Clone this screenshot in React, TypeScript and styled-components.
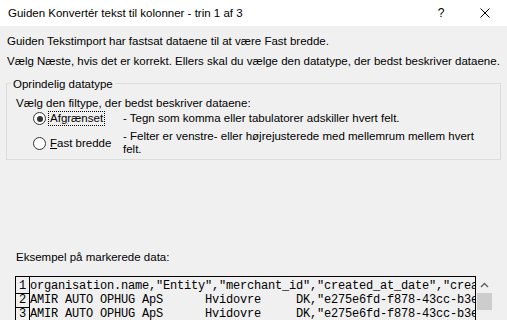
import React from "react";
import styled, { createGlobalStyle } from "styled-components";

const GlobalStyle = createGlobalStyle`
  html, body { margin: 0; padding: 0; background: #f0f0f0; }
  body {
    font-family: "Liberation Sans", Arial, sans-serif;
    font-size: 11.5px;
    color: #000;
  }
`;

const Window = styled.div`
  width: 507px;
  height: 320px;
  overflow: hidden;
  background: #f0f0f0;
`;

const TitleBar = styled.div`
  display: flex;
  align-items: center;
  height: 26px;
  background: #fff;
`;

const Title = styled.div`
  flex: 1;
  padding-left: 8px;
  white-space: nowrap;
`;

const TitleButton = styled.div`
  width: 44px;
  height: 26px;
  display: flex;
  align-items: center;
  justify-content: center;
  font-size: 12px;
  color: #000;
`;

const Intro = styled.div`
  padding: 5px 7px 0;
  line-height: 20px;
  white-space: nowrap;
`;

const GroupBox = styled.fieldset`
  margin: 4px 6px 0;
  padding: 0 0 3px;
  border: 1px solid #dcdcdc;
  min-width: 0;
`;

const Legend = styled.legend`
  margin-left: 4px;
  padding: 3px 2px 0;
  line-height: 13px;
`;

const GroupInner = styled.div`
  padding-left: 9px;
`;

const Instruction = styled.div`
  margin-top: 5px;
  line-height: 15px;
`;

const OptionList = styled.div`
  display: flex;
  flex-direction: column;
  gap: 4px;
  padding-left: 17px;
`;

const OptionRow = styled.div`
  display: grid;
  grid-template-columns: 90px 1fr;
  align-items: center;
`;

const RadioLabel = styled.div`
  display: flex;
  align-items: center;
  gap: 2px;
`;

const RadioCircle = styled.span<{ $checked?: boolean }>`
  box-sizing: border-box;
  width: 13px;
  height: 13px;
  border: 1px solid #333;
  border-radius: 50%;
  background: #fff;
  display: flex;
  align-items: center;
  justify-content: center;
  &::after {
    content: "";
    width: 6px;
    height: 6px;
    border-radius: 50%;
    background: ${(p) => (p.$checked ? "#333" : "transparent")};
  }
`;

const LabelText = styled.span<{ $focused?: boolean }>`
  padding: 0 1px;
  line-height: 13px;
  border: 1px ${(p) => (p.$focused ? "dotted #000" : "solid transparent")};
  white-space: nowrap;
`;

const Description = styled.div`
  line-height: 13px;
  max-width: 360px;
`;

const SampleLabel = styled.div`
  margin-top: 89px;
  padding-left: 16px;
  line-height: 16px;
`;

const PreviewWrap = styled.div`
  display: flex;
  margin: 11px 0 0 15px;
`;

const DataBox = styled.div`
  box-sizing: border-box;
  width: 461px;
  height: 60px;
  border: 1px solid #000;
  border-bottom: none;
  overflow: hidden;
  font-family: "Liberation Mono", "Courier New", monospace;
  font-size: 12px;
  letter-spacing: -0.2px;
  line-height: 13px;
  color: #000;
`;

const DataRow = styled.div`
  display: flex;
`;

const NumCell = styled.div<{ $first?: boolean }>`
  flex: none;
  width: 13px;
  padding-top: ${(p) => (p.$first ? "3px" : "0")};
  border-right: 1px solid #000;
  border-bottom: 1px solid #000;
  text-align: center;
`;

const TextCell = styled.div<{ $first?: boolean }>`
  padding-top: ${(p) => (p.$first ? "3px" : "0")};
  white-space: pre;
`;

const Scrollbar = styled.div`
  width: 17px;
  display: flex;
  flex-direction: column;
`;

const ScrollArrow = styled.div`
  height: 17px;
  display: flex;
  align-items: center;
  justify-content: center;
`;

const ScrollThumb = styled.div`
  height: 17px;
  margin: 0 1px;
  background: #cdcdcd;
`;

const rows = [
  'organisation.name,"Entity","merchant_id","created_at_date","created_at_time","amount"',
  'AMIR AUTO OPHUG ApS      Hvidovre     DK,"e275e6fd-f878-43cc-b3e4-9a1c2d7f0b11"',
  'AMIR AUTO OPHUG ApS      Hvidovre     DK,"e275e6fd-f878-43cc-b3e4-9a1c2d7f0b11"',
];

export default function App() {
  return (
    <Window>
      <GlobalStyle />
      <TitleBar>
        <Title>Guiden Konvertér tekst til kolonner - trin 1 af 3</Title>
        <TitleButton>?</TitleButton>
        <TitleButton>
          <svg width="10" height="10" viewBox="0 0 10 10">
            <path d="M0.5 0.5 L9.5 9.5 M9.5 0.5 L0.5 9.5" stroke="#000" strokeWidth="1" fill="none" />
          </svg>
        </TitleButton>
      </TitleBar>
      <Intro>
        <div>Guiden Tekstimport har fastsat dataene til at være Fast bredde.</div>
        <div>Vælg Næste, hvis det er korrekt. Ellers skal du vælge den datatype, der bedst beskriver dataene.</div>
      </Intro>
      <GroupBox>
        <Legend>Oprindelig datatype</Legend>
        <GroupInner>
          <Instruction>Vælg den filtype, der bedst beskriver dataene:</Instruction>
          <OptionList>
            <OptionRow>
              <RadioLabel>
                <RadioCircle $checked />
                <LabelText $focused>
                  Af<u>g</u>rænset
                </LabelText>
              </RadioLabel>
              <Description>- Tegn som komma eller tabulatorer adskiller hvert felt.</Description>
            </OptionRow>
            <OptionRow>
              <RadioLabel>
                <RadioCircle />
                <LabelText>
                  <u>F</u>ast bredde
                </LabelText>
              </RadioLabel>
              <Description>
                - Felter er venstre- eller højrejusterede med mellemrum mellem hvert felt.
              </Description>
            </OptionRow>
          </OptionList>
        </GroupInner>
      </GroupBox>
      <SampleLabel>Eksempel på markerede data:</SampleLabel>
      <PreviewWrap>
        <DataBox>
          {rows.map((r, i) => (
            <DataRow key={i}>
              <NumCell $first={i === 0}>{i + 1}</NumCell>
              <TextCell $first={i === 0}>{r}</TextCell>
            </DataRow>
          ))}
        </DataBox>
        <Scrollbar>
          <ScrollArrow>
            <svg width="9" height="6" viewBox="0 0 9 6">
              <polyline points="1,5 4.5,1.5 8,5" stroke="#606060" strokeWidth="1.4" fill="none" />
            </svg>
          </ScrollArrow>
          <ScrollThumb />
        </Scrollbar>
      </PreviewWrap>
    </Window>
  );
}
